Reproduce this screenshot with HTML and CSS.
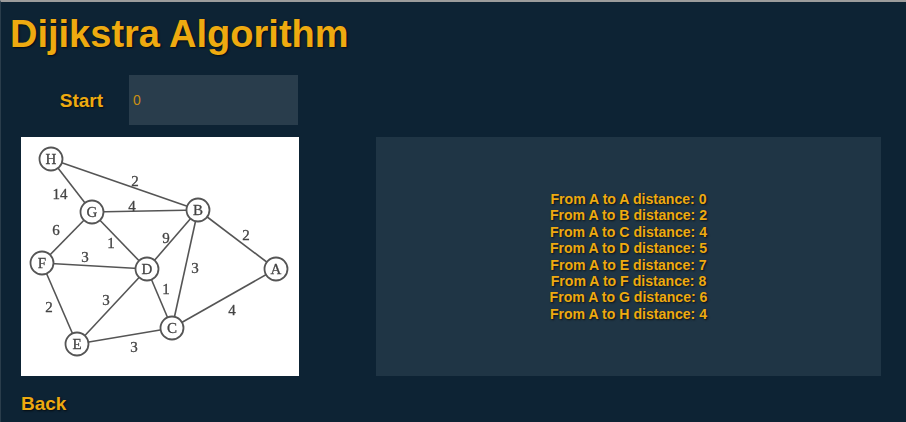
FILE: index.html
```html
<!DOCTYPE html>
<html lang="en">
<head>
    <meta charset="UTF-8">
    <title>Dijikstra Algorithm</title>
    <link rel="stylesheet" href="styles.css">
</head>
<body>

    <h1 class="title">Dijikstra Algorithm</h1>

    <form class="start-row">
        <label class="start-label" for="start">Start</label>
        <input class="start-input" id="start" type="text" value="0">
    </form>

    <div class="main-row">
        <div class="graph">
            <svg width="278" height="239" viewBox="0 0 278 239">
                <g class="edges">
                    <line x1="30" y1="22" x2="71" y2="75"/>
                    <line x1="30" y1="22" x2="177" y2="73"/>
                    <line x1="71" y1="75" x2="177" y2="73"/>
                    <line x1="71" y1="75" x2="21" y2="126"/>
                    <line x1="71" y1="75" x2="126" y2="132"/>
                    <line x1="177" y1="73" x2="126" y2="132"/>
                    <line x1="177" y1="73" x2="151" y2="191"/>
                    <line x1="177" y1="73" x2="255" y2="132"/>
                    <line x1="21" y1="126" x2="126" y2="132"/>
                    <line x1="21" y1="126" x2="56" y2="207"/>
                    <line x1="126" y1="132" x2="56" y2="207"/>
                    <line x1="126" y1="132" x2="151" y2="191"/>
                    <line x1="56" y1="207" x2="151" y2="191"/>
                    <line x1="151" y1="191" x2="255" y2="132"/>
                </g>
                <g class="nodes">
                    <circle cx="30" cy="22" r="11.5"/>
                    <circle cx="71" cy="75" r="11.5"/>
                    <circle cx="177" cy="73" r="11.5"/>
                    <circle cx="21" cy="126" r="11.5"/>
                    <circle cx="126" cy="132" r="11.5"/>
                    <circle cx="255" cy="132" r="11.5"/>
                    <circle cx="56" cy="207" r="11.5"/>
                    <circle cx="151" cy="191" r="11.5"/>
                </g>
                <g class="node-names">
                    <text x="30" y="27">H</text>
                    <text x="71" y="80">G</text>
                    <text x="177" y="78">B</text>
                    <text x="21" y="131">F</text>
                    <text x="126" y="137">D</text>
                    <text x="255" y="137">A</text>
                    <text x="56" y="212">E</text>
                    <text x="151" y="196">C</text>
                </g>
                <g class="weights">
                    <text x="39" y="62">14</text>
                    <text x="114" y="49">2</text>
                    <text x="111" y="74">4</text>
                    <text x="35" y="98">6</text>
                    <text x="90" y="111">1</text>
                    <text x="145" y="106">9</text>
                    <text x="225" y="103">2</text>
                    <text x="64" y="125">3</text>
                    <text x="174" y="136">3</text>
                    <text x="145" y="157">1</text>
                    <text x="85" y="168">3</text>
                    <text x="28" y="175">2</text>
                    <text x="211" y="178">4</text>
                    <text x="113" y="215">3</text>
                </g>
            </svg>
        </div>

        <div class="result">
            <p>From A to A distance: 0</p>
            <p>From A to B distance: 2</p>
            <p>From A to C distance: 4</p>
            <p>From A to D distance: 5</p>
            <p>From A to E distance: 7</p>
            <p>From A to F distance: 8</p>
            <p>From A to G distance: 6</p>
            <p>From A to H distance: 4</p>
        </div>
    </div>

    <a class="back" href="#">Back</a>

</body>
</html>
```

FILE: styles.css
```css
/* General body styling */
body {
    font-family: "Liberation Sans", Arial, sans-serif;
    font-weight: bold;
    background-color: #0d2334;
    color: #eeaa10;
    border-top: 2px solid #9c9c9c;
    border-left: 1px solid #2a3d4b;
    margin: 0;
    height: 422px;
    box-sizing: border-box;
    overflow: hidden;
    text-shadow: 1px 1px 2px rgba(0, 0, 0, 0.7);
}

.title {
    font-size: 38px;
    line-height: 46px;
    margin: 9px 0 0 9px;
}

.start-row {
    display: flex;
    align-items: center;
    margin-top: 18px;
}

.start-label {
    width: 128px;
    padding-right: 26px;
    padding-top: 2px;
    box-sizing: border-box;
    text-align: right;
    font-size: 19px;
}

.start-input {
    width: 169px;
    height: 50px;
    box-sizing: border-box;
    padding: 0 4px;
    border: none;
    outline: none;
    background-color: #293d4c;
    color: #c98f12;
    font-family: "Liberation Sans", Arial, sans-serif;
    font-size: 14px;
}

.main-row {
    display: flex;
    margin: 12px 0 0 20px;
    gap: 77px;
}

.graph {
    width: 278px;
    height: 239px;
    background: white;
}

.graph svg {
    display: block;
    filter: blur(0.5px);
}

.edges line {
    stroke: #555;
    stroke-width: 1.6;
}

.nodes circle {
    fill: white;
    stroke: #555;
    stroke-width: 1.8;
}

.graph text {
    font-family: "Liberation Serif", serif;
    font-size: 15px;
    font-weight: normal;
    fill: #444;
    stroke: #444;
    stroke-width: 0.3;
    text-anchor: middle;
    text-shadow: none;
}

.result {
    width: 505px;
    height: 239px;
    background-color: #1f3545;
    display: flex;
    flex-direction: column;
    align-items: center;
    justify-content: center;
    font-size: 14.1px;
    line-height: 16.4px;
}

.result p {
    margin: 0;
}

.back {
    display: block;
    margin: 17px 0 0 20px;
    font-size: 19px;
    line-height: 22px;
    color: #eeaa10;
    text-decoration: none;
}
```
